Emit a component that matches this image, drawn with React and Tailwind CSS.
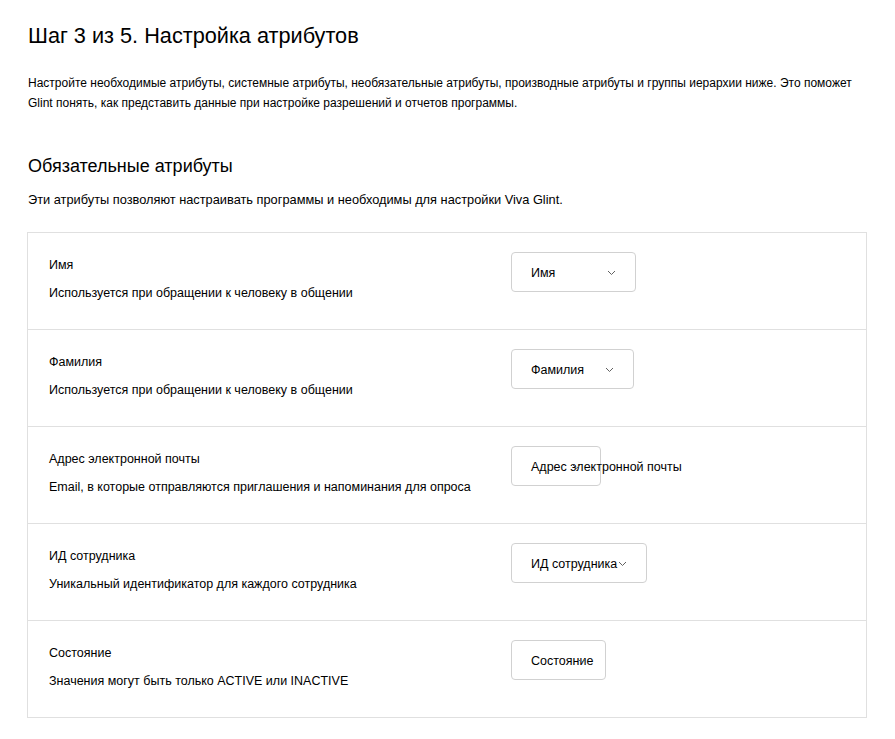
import React from "react";

const rows = [
  { label: "Имя", desc: "Используется при обращении к человеку в общении", value: "Имя", w: "w-[125px]" },
  { label: "Фамилия", desc: "Используется при обращении к человеку в общении", value: "Фамилия", w: "w-[123px]" },
  { label: "Адрес электронной почты", desc: "Email, в которые отправляются приглашения и напоминания для опроса", value: "Адрес электронной почты", w: "w-[90px]" },
  { label: "ИД сотрудника", desc: "Уникальный идентификатор для каждого сотрудника", value: "ИД сотрудника", w: "w-[136px]" },
  { label: "Состояние", desc: "Значения могут быть только ACTIVE или INACTIVE", value: "Состояние", w: "w-[95px]" },
];

function Chevron() {
  return (
    <svg width="9" height="6" viewBox="0 0 9 6" className="absolute right-[19px] top-[17px] text-[#616161]">
      <path d="M1 1 L4.5 4.5 L8 1" fill="none" stroke="currentColor" strokeWidth="1" />
    </svg>
  );
}

export default function App() {
  return (
    <div className="bg-white min-h-[739px] text-[#1a1a1a] pl-[28px] pr-[28px]" style={{ fontFamily: '"Liberation Sans", Arial, sans-serif' }}>
      <h1 className="pt-[22px] text-[21.7px] leading-[28px] font-normal text-black">Шаг 3 из 5. Настройка атрибутов</h1>
      <p className="mt-[23px] text-[12px] leading-[20px] text-black">
        Настройте необходимые атрибуты, системные атрибуты, необязательные атрибуты, производные атрибуты и группы иерархии ниже. Это поможет Glint понять, как представить данные при настройке разрешений и отчетов программы.
      </p>
      <h2 className="mt-[41px] text-[18px] leading-[24px] font-normal text-black">Обязательные атрибуты</h2>
      <p className="mt-[12px] text-[12.8px] leading-[20px] text-black">Эти атрибуты позволяют настраивать программы и необходимы для настройки Viva Glint.</p>
      <div className="mt-[22px] w-[840px] -ml-[1px] border border-[#e0e0e0]">
        {rows.map((r, i) => (
          <div key={i} className={"flex px-[21px] " + (i > 0 ? "h-[97px] border-t border-[#e0e0e0]" : "h-[96px]")}>
            <div className="w-[462px] pt-[22px]">
              <div className="text-[12.5px] leading-[20px] text-black">{r.label}</div>
              <div className="mt-[8px] text-[12.5px] leading-[20px] text-black">{r.desc}</div>
            </div>
            <div className="pt-[19px]">
              <div className={"relative h-[40px] rounded-[4px] border border-[#d1d1d1] pl-[19px] pt-[3px] flex items-center " + r.w}>
                <span className="whitespace-nowrap text-[12.5px] text-black">{r.value}</span>
                <Chevron />
              </div>
            </div>
          </div>
        ))}
      </div>
    </div>
  );
}
